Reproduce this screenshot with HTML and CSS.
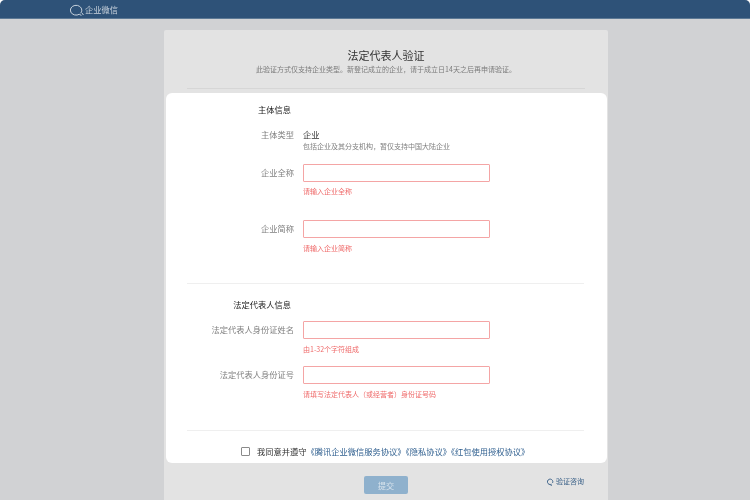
FILE: index.html
```html
<!DOCTYPE html>
<html lang="zh-CN">
<head>
<meta charset="utf-8">
<title>法定代表人验证</title>
<link rel="stylesheet" href="styles.css">
</head>
<body>
<div class="page">
  <header class="topbar">
    <div class="brand">
      <svg class="brand-icon" width="14" height="12" viewBox="0 0 14 12" fill="none" stroke="#c9d3dd" stroke-width="1">
        <path d="M9.4 10.2A5.7 4.9 0 1 1 11.8 6.2c0 1.2-.4 2.2-1.1 3"/>
        <path d="M12.3 9.4l.9 1.3" stroke-linecap="round"/>
        <path d="M9.7 10.6l1.4.6" stroke-linecap="round"/>
      </svg>
      <span>企业微信</span>
    </div>
  </header>
  <main class="card">
    <div class="card-head">
      <h1>法定代表人验证</h1>
      <p>此验证方式仅支持企业类型。新登记成立的企业，请于成立日14天之后再申请验证。</p>
    </div>
    <form class="panel">
      <section class="group group-first">
        <h2>主体信息</h2>
        <div class="row row-type">
          <label>主体类型</label>
          <div>
            <div class="type-value">企业</div>
            <div class="hint">包括企业及其分支机构，暂仅支持中国大陆企业</div>
          </div>
        </div>
        <div class="row row-input row-a">
          <label>企业全称</label>
          <div><input type="text"><div class="error">请输入企业全称</div></div>
        </div>
        <div class="row row-input row-b">
          <label>企业简称</label>
          <div><input type="text"><div class="error">请输入企业简称</div></div>
        </div>
      </section>
      <section class="group group-second">
        <h2>法定代表人信息</h2>
        <div class="row row-input row-c">
          <label>法定代表人身份证姓名</label>
          <div><input type="text"><div class="error">由1-32个字符组成</div></div>
        </div>
        <div class="row row-input row-d">
          <label>法定代表人身份证号</label>
          <div><input type="text"><div class="error">请填写法定代表人（或经营者）身份证号码</div></div>
        </div>
      </section>
      <div class="agree">
        <span class="check"></span>
        <span>我同意并遵守<a>《腾讯企业微信服务协议》《隐私协议》《红包使用授权协议》</a></span>
      </div>
    </form>
    <footer class="card-foot">
      <button type="button" class="submit">提交</button>
      <a class="help">
        <svg width="7" height="8" viewBox="0 0 7 8" fill="none" stroke="#3f648a" stroke-width="1"><path d="M4.4 6.2A2.7 2.7 0 1 1 5.6 4.9"/><path d="M3.6 7.2h1.4"/></svg>
        <span>验证咨询</span>
      </a>
    </footer>
  </main>
</div>
</body>
</html>
```

FILE: styles.css
```css
* { box-sizing: border-box; }
html, body { margin: 0; height: 100%; background: #fff; overflow: hidden; }
body { font-family: "Noto Sans CJK SC", "Liberation Sans", sans-serif; font-size: 8.25px; }
.page { width: 750px; height: 500px; background: #d1d2d4; border-radius: 5px 5px 0 0; overflow: hidden; filter: blur(0.3px); }
.topbar { height: 19px; background: #2e5278; border-bottom: 1px solid #5d7995; padding-left: 70px; }
.brand { display: flex; align-items: center; height: 18px; gap: 1px; color: #c9d3dd; font-size: 8.25px; }
.brand-icon { display: block; margin-top: 1px; }
.card { width: 444px; height: 470px; margin: 11px 0 0 164px; background: #e3e3e3; border-radius: 2px 2px 0 0; display: flex; flex-direction: column; }
.card-head { height: 59px; margin: 0 23px; border-bottom: 1px solid #d6d6d6; text-align: center; padding-top: 17px; }
.card-head h1 { margin: 0; font-size: 11px; line-height: 16px; font-weight: 400; color: #333; }
.card-head p { margin: 1px 0 0; font-size: 7px; line-height: 11px; color: #7c7c7c; }
.panel { margin: 4px 1px 0 2px; height: 370px; background: #fff; border-radius: 6px; padding: 0 23px 0 21px; display: flex; flex-direction: column; }
h2 { margin: 0; width: 104px; font-size: 8.25px; line-height: 12px; font-weight: 400; color: #222; text-align: right; }
.group { border-bottom: 1px solid #efefef; flex: none; }
.group-first { height: 191px; padding-top: 10px; }
.group-second { height: 147px; padding-top: 14px; }
.row { display: grid; grid-template-columns: 107px 1fr; column-gap: 9px; }
.row label { text-align: right; color: #808080; line-height: 12px; }
.row-type { margin-top: 13px; }
.type-value { color: #333; line-height: 12px; }
.hint { font-size: 7px; line-height: 12px; color: #808080; }
.row-input label { line-height: 16px; }
.row-a { margin-top: 12px; }
.row-b { margin-top: 23px; }
.row-c { margin-top: 11px; }
.row-d { margin-top: 11px; }
input { display: block; width: 187px; height: 18px; margin: 0; padding: 0 4px; border: 1px solid #f4a5a5; border-radius: 1px; background: #fff; outline: none; }
.error { font-size: 7px; line-height: 11px; margin-top: 4px; color: #ef6b6b; }
.row-b .error, .row-c .error, .row-d .error { margin-top: 5px; }
.agree { display: flex; align-items: center; height: 44px; padding: 0 0 4px 54px; gap: 7px; color: #333; line-height: 12px; flex: none; }
.check { width: 9px; height: 9px; border: 1px solid #8a8a8a; border-radius: 1px; background: #fff; flex: none; }
.agree a { color: #2f5f8f; }
.card-foot { display: flex; align-items: flex-start; margin-top: 13px; padding: 0 24px 0 200px; }
.submit { width: 44px; height: 18px; padding: 0; border: 0; border-radius: 2px; background: #8fb1cd; color: #d6e2ec; font: inherit; font-size: 8.25px; }
.help { display: flex; align-items: center; gap: 2px; margin-left: auto; line-height: 11px; color: #3f648a; font-size: 7px; }
```
